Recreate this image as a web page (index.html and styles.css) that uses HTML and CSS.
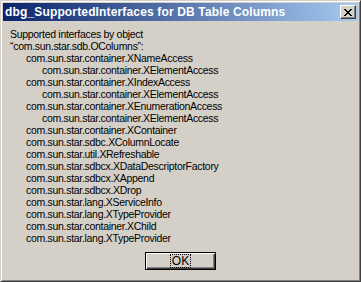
FILE: index.html
```html
<!DOCTYPE html>
<html>
<head>
<meta charset="utf-8">
<link rel="stylesheet" href="styles.css">
</head>
<body>
<div class="window">
  <div class="titlebar">
    <span class="title">dbg_SupportedInterfaces for DB Table Columns</span>
    <span class="close"><svg width="8" height="7" viewBox="0 0 8 7"><path d="M0 0h2v1h1v1h2V1h1V0h2v1H7v1H6v1H5v1h1v1h1v1h1v1H6V6H5V5H3v1H2v1H0V6h1V5h1V4h1V3H2V2H1V1H0z" fill="#000"/></svg></span>
  </div>
  <div class="content">
    <div class="lines">
      <div class="l0">Supported interfaces by object</div>
      <div class="l0">“com.sun.star.sdb.OColumns”:</div>
      <div class="l1">com.sun.star.container.XNameAccess</div>
      <div class="l2">com.sun.star.container.XElementAccess</div>
      <div class="l1">com.sun.star.container.XIndexAccess</div>
      <div class="l2">com.sun.star.container.XElementAccess</div>
      <div class="l1">com.sun.star.container.XEnumerationAccess</div>
      <div class="l2">com.sun.star.container.XElementAccess</div>
      <div class="l1">com.sun.star.container.XContainer</div>
      <div class="l1">com.sun.star.sdbc.XColumnLocate</div>
      <div class="l1">com.sun.star.util.XRefreshable</div>
      <div class="l1">com.sun.star.sdbcx.XDataDescriptorFactory</div>
      <div class="l1">com.sun.star.sdbcx.XAppend</div>
      <div class="l1">com.sun.star.sdbcx.XDrop</div>
      <div class="l1">com.sun.star.lang.XServiceInfo</div>
      <div class="l1">com.sun.star.lang.XTypeProvider</div>
      <div class="l1">com.sun.star.container.XChild</div>
      <div class="l1">com.sun.star.lang.XTypeProvider</div>
    </div>
    <div class="buttons">
      <button class="ok"><span class="focus">OK</span></button>
    </div>
  </div>
</div>
</body>
</html>
```
FILE: styles.css
```css
html, body {
  margin: 0;
  padding: 0;
  background: #d4d0c8;
}
.window {
  box-sizing: border-box;
  width: 361px;
  height: 282px;
  background: #d4d0c8;
  border-top: 1px solid #d4d0c8;
  border-left: 1px solid #d4d0c8;
  border-right: 1px solid #404040;
  border-bottom: 1px solid #404040;
  box-shadow: inset 1px 1px 0 #ffffff, inset -1px -1px 0 #808080;
  padding: 2px;
  display: flex;
  flex-direction: column;
  font-family: "Liberation Sans", Arial, sans-serif;
}
.titlebar {
  height: 18px;
  flex: none;
  background: linear-gradient(to right, #0a246a, #a6caf0);
  display: flex;
  align-items: center;
  justify-content: space-between;
  padding: 0 2px 0 2px;
}
.title {
  color: #fff;
  font-weight: bold;
  font-size: 12px;
  letter-spacing: 0.15px;
  white-space: nowrap;
}
.close {
  box-sizing: border-box;
  width: 16px;
  height: 14px;
  background: #d4d0c8;
  border-top: 1px solid #ffffff;
  border-left: 1px solid #ffffff;
  border-right: 1px solid #404040;
  border-bottom: 1px solid #404040;
  box-shadow: inset -1px -1px 0 #808080;
  display: flex;
  align-items: center;
  justify-content: center;
  padding-right: 1px;
}
.close svg { display: block; }
.content {
  flex: 1;
  display: flex;
  flex-direction: column;
  padding: 7px 7px 0 7px;
}
.lines {
  font-size: 10.5px;
  line-height: 12px;
  letter-spacing: -0.3px;
  color: #000;
  white-space: nowrap;
}
.l0 { padding-left: 0; }
.l1 { padding-left: 16px; }
.l2 { padding-left: 32px; }
.buttons {
  display: flex;
  justify-content: center;
  padding-top: 8px;
}
.ok {
  box-sizing: border-box;
  width: 71px;
  height: 18px;
  margin: 0;
  padding: 0;
  background: #d4d0c8;
  border: 1px solid #000;
  box-shadow: inset 1px 1px 0 #ffffff, inset -1px -1px 0 #404040, inset -2px -2px 0 #808080;
  display: flex;
  align-items: center;
  justify-content: center;
  font-family: "Liberation Sans", Arial, sans-serif;
  font-size: 12px;
  color: #000;
}
.focus {
  outline: 1px dotted #000;
  padding: 0 1px;
  line-height: 12px;
}
```
